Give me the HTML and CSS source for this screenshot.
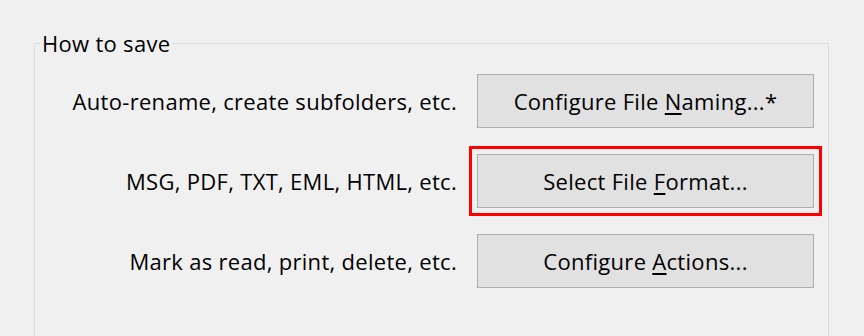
FILE: index.html
```html
<!DOCTYPE html>
<html lang="en">
<head>
  <meta charset="UTF-8">
  <title>How to save</title>
  <link rel="stylesheet" href="styles.css">
</head>
<body>
  <fieldset class="group">
    <legend>How to save</legend>
    <div class="row">
      <span class="label">Auto-rename, create subfolders, etc.</span>
      <button class="btn">Configure File <u>N</u>aming...*</button>
    </div>
    <div class="row">
      <span class="label">MSG, PDF, TXT, EML, HTML, etc.</span>
      <button class="btn highlighted">Select File <u>F</u>ormat...</button>
    </div>
    <div class="row">
      <span class="label">Mark as read, print, delete, etc.</span>
      <button class="btn">Configure <u>A</u>ctions...</button>
    </div>
  </fieldset>
</body>
</html>
```

FILE: styles.css
```css
/* Base */
body {
  margin: 0;
  background: #f0f0f0;
  font-family: 'Open Sans', 'Noto Sans', sans-serif;
  font-size: 22px;
  letter-spacing: 0.3px;
  color: #000000;
  height: 336px;
  overflow: hidden;
}

/* Group box */
.group {
  margin: 28px 0 0 34px;
  width: 795px;
  box-sizing: border-box;
  border: 1px solid #dcdcdc;
  padding: 3px 0 40px 0;
}
.group legend {
  padding: 0 2px;
  margin-left: 5px;
  font-size: 22px;
}

/* Rows */
.row {
  display: grid;
  grid-template-columns: 422px 337px;
  column-gap: 20px;
  align-items: center;
  height: 80px;
}
.label {
  text-align: right;
  white-space: nowrap;
}
.btn {
  height: 54px;
  background: #e1e1e1;
  border: 1px solid #adadad;
  font-family: inherit;
  font-size: 22px;
  letter-spacing: 0.3px;
  color: #000000;
  padding: 0;
}
.btn u {
  text-underline-offset: 3px;
}
.highlighted {
  outline: 3px solid #ff0000;
  outline-offset: 5px;
}
```
